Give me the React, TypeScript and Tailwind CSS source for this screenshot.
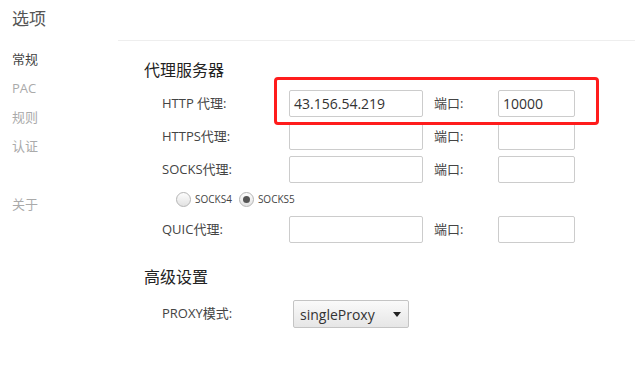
/** 选项页：代理服务器设置 */

const font = "font-['Open_Sans','Noto_Sans_CJK_SC',sans-serif]";

export default function App() {
  return (
    <div className={`flex h-[372px] w-[635px] bg-white ${font}`}>
      <aside className="w-[118px] shrink-0 pl-3">
        <h1 className="pt-[7px] text-[17px] leading-[24px] text-[#555]">选项</h1>
        <nav className="mt-[14px] flex flex-col text-[13px] leading-[29px] text-[#aaa]">
          <span className="text-[#444]">常规</span>
          <span>PAC</span>
          <span>规则</span>
          <span>认证</span>
          <span className="mt-[29px]">关于</span>
        </nav>
      </aside>

      <main className="relative mt-[40px] flex-1 border-t border-[#eee] pl-[26px]">
        <Section title="代理服务器" />
        <div className="mt-[10px] flex flex-col gap-[6px] pl-[18px]">
          <ProxyRow label="HTTP 代理:" host="43.156.54.219" port="10000" />
          <ProxyRow label="HTTPS代理:" />
          <ProxyRow label="SOCKS代理:" />
        </div>
        <div className="flex h-[33px] items-center gap-[4px] pl-[32px] text-[10px] text-[#444]">
          <Radio />
          <span className="mr-[3px]">SOCKS4</span>
          <Radio checked />
          <span>SOCKS5</span>
        </div>
        <div className="pl-[18px]">
          <ProxyRow label="QUIC代理:" />
        </div>

        <div className="mt-[5px]">
          <Section title="高级设置" />
        </div>
        <div className="mt-[13px] flex items-center pl-[18px]">
          <span className="w-[131px] text-[13px] text-[#444]">PROXY模式:</span>
          <div className="flex h-[28px] w-[116px] items-center justify-between rounded-[2px] border border-[#c4c4c4] bg-gradient-to-b from-[#fafafa] to-[#e6e6e6] pl-[6px] pr-[7px] text-[14px] text-[#333]">
            <span>singleProxy</span>
            <span className="h-0 w-0 border-x-[4.5px] border-t-[5px] border-x-transparent border-t-[#222]" />
          </div>
        </div>

        {/* 标注框 */}
        <div className="absolute left-[156px] top-[36px] h-[48px] w-[325px] rounded-[4px] border-[3px] border-[#ff1c1c]" />
      </main>
    </div>
  );
}

function Section({ title }: { title: string }) {
  return <h2 className="pt-[19px] text-[16px] leading-[20px] text-[#222]">{title}</h2>;
}

function ProxyRow({ label, host = "", port = "" }: { label: string; host?: string; port?: string }) {
  return (
    <div className="flex h-[27px] items-center text-[13px] text-[#444]">
      <span className="w-[127px]">{label}</span>
      <div className="flex h-[27px] w-[134px] items-center rounded-[2px] border border-[#ccc] px-[4px] text-[14px] text-[#333]">
        {host}
      </div>
      <span className="w-[75px] pl-[11px]">端口:</span>
      <div className="flex h-[27px] w-[77px] items-center rounded-[2px] border border-[#ccc] px-[4px] text-[14px] text-[#333]">
        {port}
      </div>
    </div>
  );
}

function Radio({ checked = false }: { checked?: boolean }) {
  return (
    <span className="flex h-[15px] w-[15px] items-center justify-center rounded-full border border-[#b5b5b5] bg-gradient-to-b from-[#fdfdfd] to-[#e2e2e2]">
      {checked && <span className="h-[7px] w-[7px] rounded-full bg-[#555]" />}
    </span>
  );
}
